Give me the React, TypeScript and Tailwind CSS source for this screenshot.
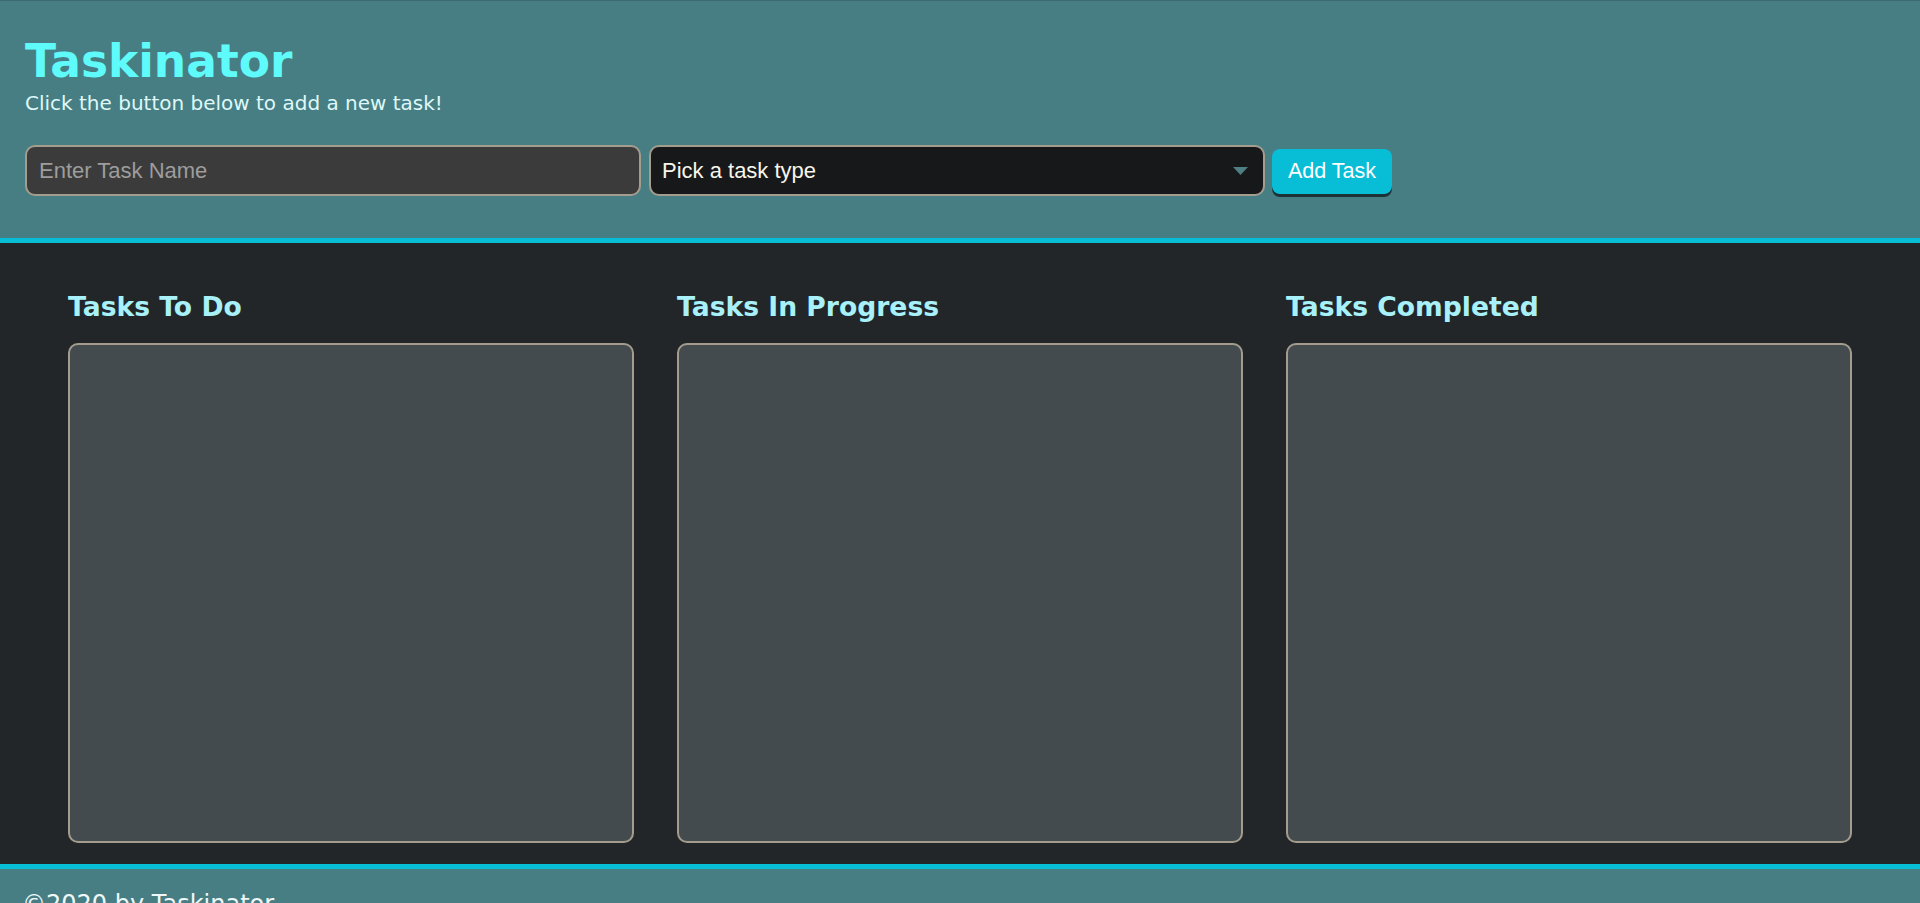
import React from 'react';

const columns = ['Tasks To Do', 'Tasks In Progress', 'Tasks Completed'];

export default function App() {
  return (
    <div className="min-h-screen bg-[#232629] font-['DejaVu_Sans',Verdana,sans-serif]">
      {/* Header */}
      <header className="bg-[#477e84] border-t border-[#3b6a70] border-b-[5px] border-b-[#08bdd6] pt-[34px] pb-[42px] px-[25px]">
        <h1 className="text-[45.5px] leading-[53px] font-bold text-[#5ffbfb]">Taskinator</h1>
        <p className="text-[20px] leading-[30px] text-[#def8f8]">Click the button below to add a new task!</p>

        <form className="flex items-start mt-[27px]" onSubmit={(e) => e.preventDefault()}>
          <input
            type="text"
            placeholder="Enter Task Name"
            className="w-[616px] h-[51px] px-[12px] rounded-[10px] border-2 border-[#a49d8e] bg-[#3b3b3b] text-[#f5f5f5] placeholder:text-[#9d9d9d] text-[22px] font-['Liberation_Sans',Arial,sans-serif] outline-none"
          />
          <div className="relative ml-[8px]">
            <select
              defaultValue=""
              className="appearance-none w-[616px] h-[51px] pl-[11px] pr-[40px] rounded-[10px] border-2 border-[#a49d8e] bg-[#17181a] text-[#f8f5ea] text-[22px] font-['Liberation_Sans',Arial,sans-serif] outline-none"
            >
              <option value="" disabled>
                Pick a task type
              </option>
              <option value="print">Print</option>
              <option value="web">Web</option>
              <option value="mobile">Mobile</option>
            </select>
            <svg
              className="absolute right-[17px] top-[22px] pointer-events-none"
              width="15"
              height="8"
              viewBox="0 0 15 8"
            >
              <polygon points="0,0 15,0 7.5,8" fill="#4f7e84" />
            </svg>
          </div>
          <button
            type="submit"
            className="ml-[7px] mt-[4px] w-[120px] h-[45px] rounded-[8px] bg-[#08bdd6] text-white text-[21.5px] font-['Liberation_Sans',Arial,sans-serif] shadow-[0_3px_0_#1d3236]"
          >
            Add Task
          </button>
        </form>
      </header>

      {/* Task columns */}
      <main className="flex gap-[43px] px-[68px] pt-[49px] pb-[21px]">
        {columns.map((title) => (
          <section key={title} className="flex-1 flex flex-col">
            <h2 className="text-[26.6px] leading-[30px] font-bold text-[#a8f1f9]">{title}</h2>
            <ul className="mt-[21px] h-[500px] rounded-[10px] border-2 border-[#a49d8e] bg-[#444b4f]"></ul>
          </section>
        ))}
      </main>

      {/* Footer */}
      <footer className="bg-[#477e84] border-t-[5px] border-[#08bdd6] pt-[21px] pb-[20px] px-[22px]">
        <h3 className="text-[24px] leading-[28px] text-[#eef8f8]">©2020 by Taskinator</h3>
      </footer>
    </div>
  );
}
